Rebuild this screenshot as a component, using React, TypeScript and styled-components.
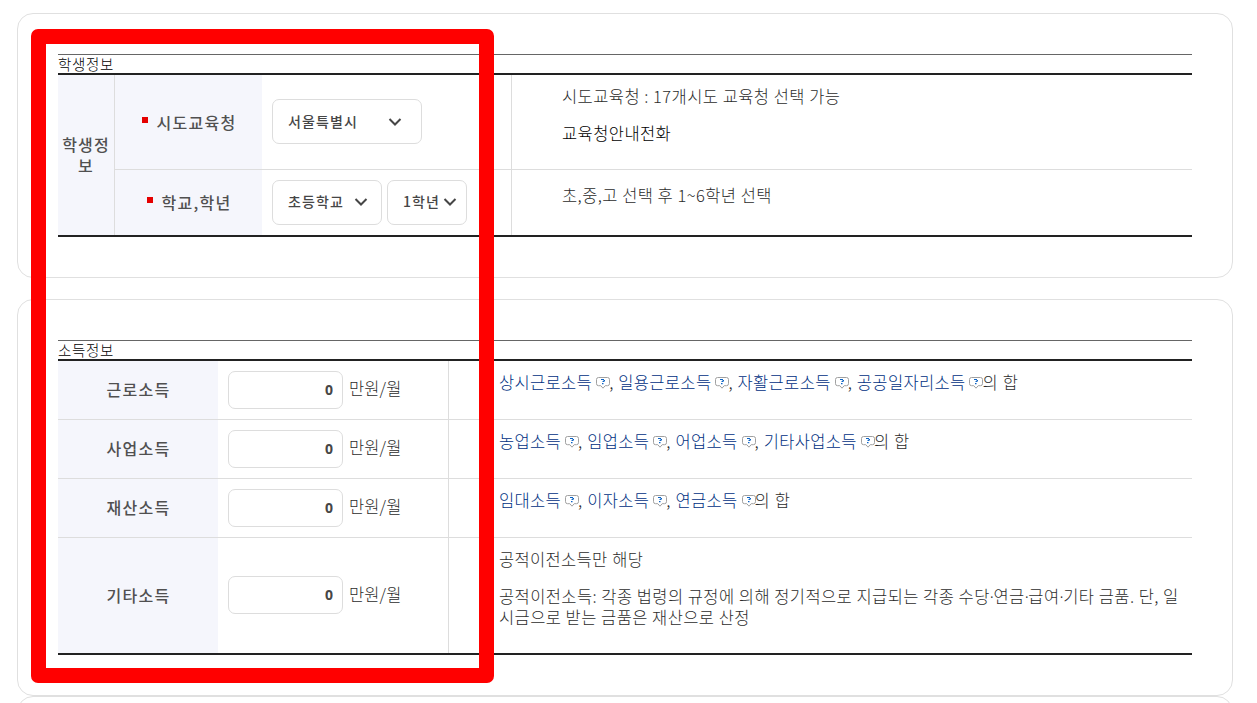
import { Fragment } from "react";
import styled, { createGlobalStyle } from "styled-components";

const incomeRows = [
  { label: "근로소득", items: ["상시근로소득", "일용근로소득", "자활근로소득", "공공일자리소득"] },
  { label: "사업소득", items: ["농업소득", "임업소득", "어업소득", "기타사업소득"] },
  { label: "재산소득", items: ["임대소득", "이자소득", "연금소득"] },
];

function HelpIcon() {
  return (
    <HelpSvg width="14" height="12" viewBox="0 0 14 12" fill="none">
      <path
        d="M2.5 0.5h9a2 2 0 0 1 2 2v4.2a2 2 0 0 1-2 2H9.2L7 11.2 4.8 8.7H2.5a2 2 0 0 1-2-2V2.5a2 2 0 0 1 2-2z"
        fill="#fff"
        stroke="#a0a0a0"
      />
      <path d="M5 2h3v1H5zM7.5 3H9v1H7.5zM6.5 4h2v1h-2zM6 6h1.5v1.2H6z" fill="#0b62c4" />
    </HelpSvg>
  );
}

function Chevron() {
  return (
    <svg width="14" height="10" viewBox="0 0 14 10" fill="none">
      <path d="M1.5 2L7 7.5 12.5 2" stroke="#464646" strokeWidth="2" />
    </svg>
  );
}

function SelectBox({ value, width, gap }: { value: string; width: number; gap: number }) {
  return (
    <Select $width={width} $gap={gap} type="button">
      <SelectValue>{value}</SelectValue>
      <Chevron />
    </Select>
  );
}

function AmountField() {
  return (
    <FieldCell>
      <AmountInput defaultValue="0" />
      <Unit>만원/월</Unit>
    </FieldCell>
  );
}

export default function App() {
  return (
    <>
      <GlobalStyle />
      <Page>
        <Card $height={265} $gap={21}>
          <Caption>학생정보</Caption>
          <StudentTable>
            <GroupHead>
              학생정
              <br />보
            </GroupHead>
            <StudentRow $height={95}>
              <StudentLabel>
                <Required />
                시도교육청
              </StudentLabel>
              <SelectCell>
                <SelectBox value="서울특별시" width={150} gap={30} />
              </SelectCell>
              <StudentDesc $top={11}>
                <p>시도교육청 : 17개시도 교육청 선택 가능</p>
                <DarkText>교육청안내전화</DarkText>
              </StudentDesc>
            </StudentRow>
            <StudentRow $height={65}>
              <StudentLabel>
                <Required />
                학교,학년
              </StudentLabel>
              <SelectCell>
                <SelectBox value="초등학교" width={110} gap={10} />
                <SelectBox value="1학년" width={80} gap={3} />
              </SelectCell>
              <StudentDesc $top={15}>
                <p>초,중,고 선택 후 1~6학년 선택</p>
              </StudentDesc>
            </StudentRow>
          </StudentTable>
        </Card>
        <Card $height={397} $gap={0}>
          <Caption>소득정보</Caption>
          <IncomeTable>
            {incomeRows.map((row) => (
              <IncomeRow key={row.label} $height={59}>
                <IncomeLabel>{row.label}</IncomeLabel>
                <AmountField />
                <IncomeDesc>
                  <p>
                    {row.items.map((item, i) => (
                      <Fragment key={item}>
                        {i > 0 && ", "}
                        <HelpLink href="#">
                          {item}
                          <HelpIcon />
                        </HelpLink>
                      </Fragment>
                    ))}
                    의 합
                  </p>
                </IncomeDesc>
              </IncomeRow>
            ))}
            <IncomeRow $height={115}>
              <IncomeLabel>기타소득</IncomeLabel>
              <AmountField />
              <IncomeDesc>
                <p>공적이전소득만 해당</p>
                <LongText>
                  공적이전소득: 각종 법령의 규정에 의해 정기적으로 지급되는 각종 수당<Dot>·</Dot>연금<Dot>·</Dot>급여
                  <Dot>·</Dot>기타 금품. 단, 일
                  <br />
                  시금으로 받는 금품은 재산으로 산정
                </LongText>
              </IncomeDesc>
            </IncomeRow>
          </IncomeTable>
        </Card>
        <Card $height={200} $gap={0} />
        <Highlight />
      </Page>
    </>
  );
}

const GlobalStyle = createGlobalStyle`
  * {
    box-sizing: border-box;
  }

  body {
    margin: 0;
    overflow: hidden;
    background: #fff;
  }

  p {
    margin: 0;
  }
`;

const Page = styled.div`
  position: relative;
  height: 703px;
  padding: 13px 24px 0 17px;
  overflow: hidden;
  color: #464646;
  font-family: "Noto Sans CJK KR", sans-serif;
  font-size: 16px;
  line-height: 21px;
`;

const Card = styled.section<{ $height: number; $gap: number }>`
  height: ${({ $height }) => $height}px;
  margin-bottom: ${({ $gap }) => $gap}px;
  padding: 40px;
  border: 1px solid #e0e0e0;
  border-radius: 16px;
`;

const Caption = styled.h2`
  height: 19px;
  margin: 0;
  border-top: 1px solid #666;
  color: #000;
  font-size: 14.5px;
  font-weight: 300;
  line-height: 17px;
  letter-spacing: 0.7px;
`;

const StudentTable = styled.div`
  display: grid;
  grid-template-columns: 57px 1fr;
  grid-template-rows: 95px 65px;
  border-top: 2px solid #222;
  border-bottom: 2px solid #222;
`;

const GroupHead = styled.div`
  display: flex;
  grid-row: span 2;
  align-items: center;
  justify-content: center;
  border-right: 1px solid #ddd;
  background: #f5f6fc;
  color: #505050;
  font-weight: 500;
  letter-spacing: 1.1px;
  text-align: center;
`;

const StudentRow = styled.div<{ $height: number }>`
  display: grid;
  grid-template-columns: 147px 250px 1fr;
  height: ${({ $height }) => $height}px;

  &:not(:last-child) {
    border-bottom: 1px solid #ddd;
  }
`;

const LabelCell = styled.div`
  display: flex;
  align-items: center;
  justify-content: center;
  background: #f5f6fc;
  color: #505050;
  font-weight: 500;
  letter-spacing: 1.3px;
`;

const StudentLabel = styled(LabelCell)`
  padding-left: 2px;
`;

const IncomeLabel = styled(LabelCell)`
  padding: 0 0 1px 1px;
`;

const Required = styled.i`
  width: 6px;
  height: 6px;
  margin: -5px 8px 0 0;
  background: #e50000;
`;

const SelectCell = styled.div`
  display: flex;
  align-items: center;
  gap: 5px;
  padding: 0 0 1px 10px;
  border-right: 1px solid #ddd;
`;

const Select = styled.button<{ $width: number; $gap: number }>`
  display: flex;
  align-items: center;
  gap: ${({ $gap }) => $gap}px;
  width: ${({ $width }) => $width}px;
  height: 45px;
  padding: 0 0 0 15px;
  border: 1px solid #ddd;
  border-radius: 7px;
  background: #fff;
  color: #464646;
  font-family: inherit;
  font-size: 14px;
  font-weight: 500;
  letter-spacing: 1.1px;
  white-space: nowrap;
`;

const SelectValue = styled.span`
  padding-bottom: 2px;
`;

const StudentDesc = styled.div<{ $top: number }>`
  display: flex;
  flex-direction: column;
  gap: 16px;
  padding: ${({ $top }) => $top}px 0 0 50px;
  color: #2c2c2c;
  font-size: 16.5px;
  font-weight: 300;
  letter-spacing: 0.42px;
  word-spacing: 0.2px;
`;

const DarkText = styled.p`
  color: #000;
`;

const IncomeTable = styled.div`
  border-top: 2px solid #222;
  border-bottom: 2px solid #222;
`;

const IncomeRow = styled.div<{ $height: number }>`
  display: grid;
  grid-template-columns: 160px 231px 1fr;
  height: ${({ $height }) => $height}px;

  &:not(:last-child) {
    border-bottom: 1px solid #ddd;
  }
`;

const FieldCell = styled.div`
  display: flex;
  align-items: center;
  gap: 6px;
  padding: 0 0 1px 10px;
  border-right: 1px solid #ddd;
`;

const AmountInput = styled.input`
  width: 115px;
  height: 38px;
  padding: 0 9px 1px;
  border: 1px solid #ddd;
  border-radius: 7px;
  color: #464646;
  font-family: "Noto Sans", sans-serif;
  font-size: 14px;
  font-weight: 700;
  text-align: right;
`;

const Unit = styled.span`
  padding-bottom: 2px;
  color: #2c2c2c;
  font-size: 16.5px;
  font-weight: 300;
  letter-spacing: 0.1px;
`;

const IncomeDesc = styled.div`
  display: flex;
  flex-direction: column;
  gap: 16px;
  padding: 10px 0 0 50px;
  color: #2c2c2c;
  font-size: 16.5px;
  font-weight: 300;
  line-height: 22px;
  letter-spacing: 0.34px;
  word-spacing: 0.7px;
  white-space: nowrap;
`;

const HelpLink = styled.a`
  color: #00307f;
  text-decoration: none;
`;

const HelpSvg = styled.svg`
  margin: 0 -1px 0 4px;
  vertical-align: 0;
`;

const LongText = styled.p`
  line-height: 21px;
  letter-spacing: 0.4px;
  word-spacing: 0.25px;
`;

/* narrow middle dot, the Korean face sets it too wide */
const Dot = styled.span`
  font-family: "Noto Sans", sans-serif;
  letter-spacing: -0.3px;
`;

/* red marker around the input area */
const Highlight = styled.div`
  position: absolute;
  top: 29px;
  left: 31px;
  width: 463px;
  height: 654px;
  border: 15px solid #f00;
  border-radius: 7px;
  pointer-events: none;
`;
